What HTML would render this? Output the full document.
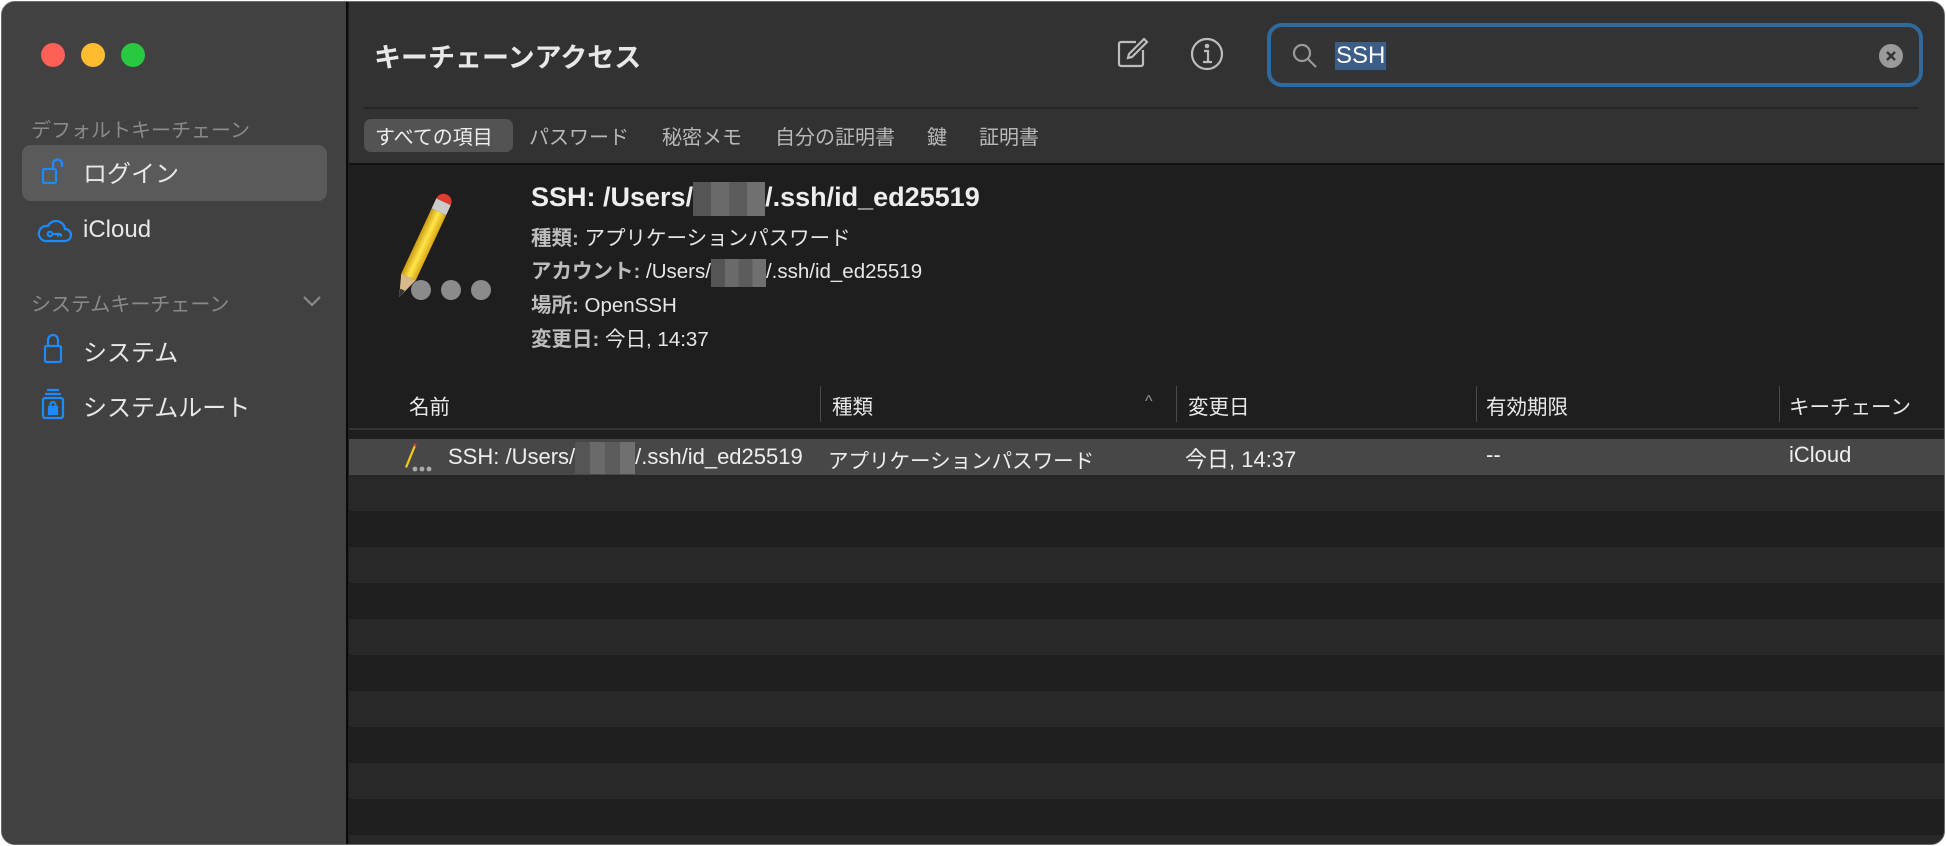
<!DOCTYPE html>
<html><head><meta charset="utf-8"><style>
*{margin:0;padding:0;box-sizing:border-box}
body{width:1946px;height:846px;background:#fff;overflow:hidden;font-family:"Liberation Sans","Noto Sans CJK JP",sans-serif;position:relative}
.win{position:absolute;left:1px;top:1px;width:1944px;height:844px;border-radius:14px;overflow:hidden;background:#1e1e1e;border:1px solid #6a6a6a}
.side{position:absolute;left:0;top:0;width:346px;height:100%;background:#414141;border-right:2px solid #0a0a0a}
.tl{position:absolute;top:41px;width:24px;height:24px;border-radius:50%}
.a{position:absolute;white-space:nowrap}
.sh{color:#8a8a8a;font-size:20px}
.si{color:#e8e8e8;font-size:24px}
.top{position:absolute;left:347px;top:0;right:0;height:163px;background:#323232;border-bottom:2px solid #111}
.tab{color:#b8b8b8;font-size:20px;top:119px}
.det{color:#e6e6e6;font-size:20.5px}
.det b{color:#bdbdbd}
.hd{color:#e8e8e8;font-size:20.5px;top:388px}
.vs{position:absolute;top:384px;width:1px;height:36px;background:#4a4a4a}
.mos{display:inline-block;vertical-align:middle;background:linear-gradient(90deg,#555 0 25%,#6a6a6a 25% 50%,#5c5c5c 50% 75%,#707070 75%)}
.row{position:absolute;left:347px;right:0;height:36px}
.rt{color:#eee;font-size:22px;top:440px}
</style></head><body>
<div class="win">
<div class="side">
<div class="tl" style="left:39px;background:#fe5f57"></div>
<div class="tl" style="left:79px;background:#febc2e"></div>
<div class="tl" style="left:119px;background:#28c840"></div>
<div class="a sh" style="left:29px;top:112px">デフォルトキーチェーン</div>
<div style="position:absolute;left:20px;top:143px;width:305px;height:56px;border-radius:9px;background:#5a5a5a"></div>
<svg class="a" style="left:38px;top:154px" width="30" height="30" viewBox="0 0 30 30" fill="none" stroke="#1a8cff" stroke-width="2.2"><rect x="3" y="13" width="13" height="14" rx="1.5"/><path d="M13 13V8a4.5 4.5 0 0 1 9 0v3"/></svg>
<div class="a si" style="left:81px;top:152px">ログイン</div>
<svg class="a" style="left:35px;top:215px" width="36" height="28" viewBox="0 0 36 28" fill="none" stroke="#1a8cff" stroke-width="2.2"><path d="M8 24h20a6 6 0 0 0 0-12 9 9 0 0 0-17-3 7.5 7.5 0 0 0-3 15z"/><circle cx="13" cy="17" r="2.3"/><path d="M15 17h9M21 17v2.5M24 17v2.5"/></svg>
<div class="a si" style="left:81px;top:214px">iCloud</div>
<div class="a sh" style="left:29px;top:286px">システムキーチェーン</div>
<svg class="a" style="left:300px;top:292px" width="20" height="14" viewBox="0 0 20 14" fill="none" stroke="#8a8a8a" stroke-width="2.2"><path d="M2 3l8 8 8-8"/></svg>
<svg class="a" style="left:40px;top:329px" width="24" height="34" viewBox="0 0 24 34" fill="none" stroke="#1a8cff" stroke-width="2.2"><rect x="3" y="15" width="16" height="16" rx="1.5"/><path d="M6 15V9a5 5 0 0 1 10 0v6"/></svg>
<div class="a si" style="left:81px;top:331px">システム</div>
<svg class="a" style="left:38px;top:385px" width="28" height="34" viewBox="0 0 28 34" fill="none" stroke="#1a8cff" stroke-width="2.2"><path d="M7 3h12M5 7h16"/><rect x="3" y="11" width="20" height="20" rx="2"/><rect x="9" y="20" width="8" height="7" fill="#1a8cff"/><path d="M10.5 20v-2.5a2.5 2.5 0 0 1 5 0V20"/></svg>
<div class="a si" style="left:81px;top:386px">システムルート</div>
</div>

<div class="top">
<div class="a" style="left:25px;top:34px;color:#e8e8e8;font-size:27px;font-weight:bold">キーチェーンアクセス</div>
<svg class="a" style="left:765px;top:34px" width="36" height="36" viewBox="0 0 36 36" fill="none" stroke="#bdbdbd" stroke-width="2.2"><path d="M22 6H7a2 2 0 0 0-2 2v20a2 2 0 0 0 2 2h20a2 2 0 0 0 2-2V14"/><path d="M14 22l1-4 15-15 3 3-15 15z"/></svg>
<svg class="a" style="left:840px;top:34px" width="36" height="36" viewBox="0 0 36 36" fill="none" stroke="#bdbdbd" stroke-width="2.2"><circle cx="18" cy="18" r="15"/><path d="M15 15h4v11M14 26h9"/><circle cx="18" cy="10" r="1.2" fill="#bdbdbd"/></svg>
<div style="position:absolute;left:918px;top:21px;width:656px;height:64px;border:4px solid #2f6a9e;border-radius:15px;background:#343434"></div>
<svg class="a" style="left:942px;top:40px" width="28" height="28" viewBox="0 0 28 28" fill="none" stroke="#9a9a9a" stroke-width="2.2"><circle cx="11" cy="11" r="8"/><path d="M17 17l8 8"/></svg>
<div class="a" style="left:986px;top:40px;height:28px;padding:0 1px;background:#3b5d86;color:#fff;font-size:24px;line-height:28px">SSH</div>
<svg class="a" style="left:1529px;top:41px" width="26" height="26" viewBox="0 0 26 26"><circle cx="13" cy="13" r="12" fill="#9a9a9a"/><path d="M9 9l8 8M17 9l-8 8" stroke="#343434" stroke-width="2.4"/></svg>
<div style="position:absolute;left:15px;right:25px;top:105px;height:2px;background:#262626"></div>
<div style="position:absolute;left:15px;top:117px;width:149px;height:33px;border-radius:7px;background:#535353"></div>
<div class="a tab" style="left:26px;color:#eee">すべての項目</div>
<div class="a tab" style="left:180px">パスワード</div>
<div class="a tab" style="left:313px">秘密メモ</div>
<div class="a tab" style="left:426px">自分の証明書</div>
<div class="a tab" style="left:578px">鍵</div>
<div class="a tab" style="left:630px">証明書</div>
</div>

<svg class="a" style="left:372px;top:186px" width="130" height="120" viewBox="0 0 130 120">
<defs><linearGradient id="g" x1="0" x2="1"><stop offset="0" stop-color="#c99a10"/><stop offset=".5" stop-color="#ffe54a"/><stop offset="1" stop-color="#d9a514"/></linearGradient></defs>
<g transform="rotate(25 48 60)"><rect x="40" y="20" width="16" height="72" fill="url(#g)"/><rect x="40" y="9" width="16" height="11" fill="#ccc"/><path d="M40 9a8 8 0 0 1 16 0z" fill="#e23b2e"/><path d="M40 92h16l-8 22z" fill="#d9b98a"/><path d="M45.5 106h5l-2.5 8z" fill="#333"/></g>
<circle cx="47" cy="102" r="10" fill="#8b8b8b"/><circle cx="77" cy="102" r="10" fill="#8b8b8b"/><circle cx="107" cy="102" r="10" fill="#8b8b8b"/>
</svg>
<div class="a" style="left:529px;top:180px;color:#eee;font-size:27px;font-weight:bold">SSH: /Users/<span class="mos" style="width:72px;height:34px"></span>/.ssh/id_ed25519</div>
<div class="a det" style="left:529px;top:219px"><b>種類:</b> アプリケーションパスワード</div>
<div class="a det" style="left:529px;top:252px"><b>アカウント:</b> /Users/<span class="mos" style="width:55px;height:28px"></span>/.ssh/id_ed25519</div>
<div class="a det" style="left:529px;top:286px"><b>場所:</b> OpenSSH</div>
<div class="a det" style="left:529px;top:320px"><b>変更日:</b> 今日, 14:37</div>

<div class="a hd" style="left:407px">名前</div>
<div class="vs" style="left:818px"></div>
<div class="a hd" style="left:830px">種類</div>
<div class="a" style="left:1143px;top:391px;color:#999;font-size:16px">^</div>
<div class="vs" style="left:1174px"></div>
<div class="a hd" style="left:1186px">変更日</div>
<div class="vs" style="left:1474px"></div>
<div class="a hd" style="left:1484px">有効期限</div>
<div class="vs" style="left:1777px"></div>
<div class="a hd" style="left:1787px">キーチェーン</div>
<div style="position:absolute;left:347px;right:0;top:426px;height:2px;background:#333"></div>

<div class="row" style="top:437px;background:#474747"></div>
<div class="row" style="top:473px;background:#282828"></div>
<div class="row" style="top:545px;background:#282828"></div>
<div class="row" style="top:617px;background:#282828"></div>
<div class="row" style="top:689px;background:#282828"></div>
<div class="row" style="top:761px;background:#282828"></div>
<div class="row" style="top:833px;background:#282828"></div>
<svg class="a" style="left:400px;top:441px" width="34" height="30" viewBox="0 0 34 30"><path d="M12 2l2 1-9 22-2-1z" fill="#f2c81c"/><circle cx="13" cy="2" r="1.5" fill="#e23b2e"/><circle cx="13" cy="26" r="2.4" fill="#aaa"/><circle cx="20" cy="26" r="2.4" fill="#aaa"/><circle cx="27" cy="26" r="2.4" fill="#aaa"/></svg>
<div class="a rt" style="left:446px">SSH: /Users/<span class="mos" style="width:60px;height:32px"></span>/.ssh/id_ed25519</div>
<div class="a rt" style="left:826px;font-size:20.5px;top:442px">アプリケーションパスワード</div>
<div class="a rt" style="left:1183px">今日, 14:37</div>
<div class="a rt" style="left:1484px">--</div>
<div class="a rt" style="left:1787px">iCloud</div>
</div>
</body></html>
